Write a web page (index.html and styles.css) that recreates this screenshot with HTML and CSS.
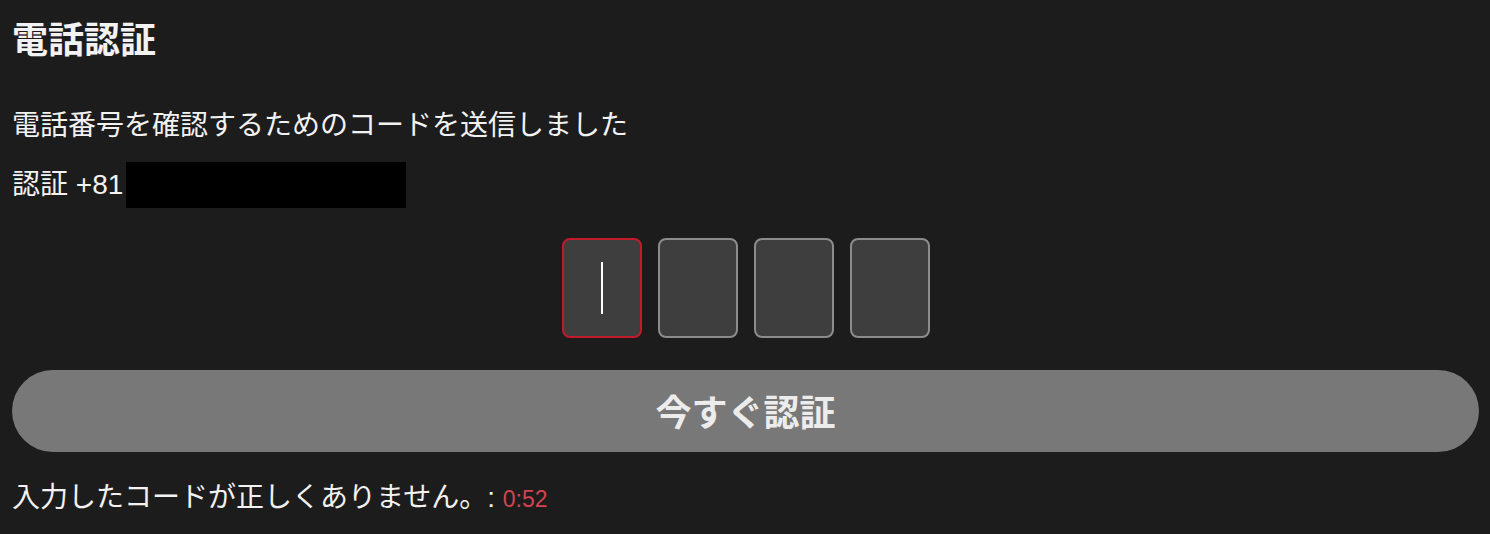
FILE: index.html
```html
<!DOCTYPE html>
<html lang="ja">
<head>
<meta charset="utf-8">
<title>電話認証</title>
<link rel="stylesheet" href="styles.css">
</head>
<body>
<main class="verify">
  <h1 class="verify-title">電話認証</h1>
  <p class="verify-lead">電話番号を確認するためのコードを送信しました</p>
  <p class="verify-phone">認証 +81<span class="masked"></span></p>
  <div class="code-row">
    <div class="code-cell active"><span class="caret"></span></div>
    <div class="code-cell"></div>
    <div class="code-cell"></div>
    <div class="code-cell"></div>
  </div>
  <button class="verify-btn" type="button">今すぐ認証</button>
  <p class="verify-error">入力したコードが正しくありません。: <span class="timer">0:52</span></p>
</main>
</body>
</html>
```
FILE: styles.css
```css
* { box-sizing: border-box; }

html, body {
  margin: 0;
  height: 100%;
  background: #1c1c1c;
}

body {
  color: #f2f2f2;
  font-family: "Liberation Sans", "Noto Sans CJK JP", sans-serif;
}

.verify {
  display: flex;
  flex-direction: column;
  padding: 16px 11px 0 12px;
}

.verify-title {
  margin: 0;
  font-size: 36px;
  line-height: 50px;
  font-weight: 700;
}

.verify-lead {
  margin: 40px 0 0;
  font-size: 28px;
  line-height: 40px;
}

.verify-phone {
  margin: 16px 0 0;
  display: flex;
  align-items: center;
  font-size: 28px;
  line-height: 46px;
}

.masked {
  display: inline-block;
  width: 280px;
  height: 46px;
  background: #000;
  margin-left: 3px;
}

.code-row {
  display: flex;
  justify-content: center;
  gap: 16px;
  margin-top: 30px;
}

.code-cell {
  width: 80px;
  height: 100px;
  border: 2px solid #8c8c8c;
  border-radius: 8px;
  background: #3e3e3e;
  display: flex;
  align-items: center;
  justify-content: center;
}

.code-cell.active {
  border-color: #c21a28;
}

.caret {
  width: 2px;
  height: 52px;
  background: #fff;
}

.verify-btn {
  margin-top: 32px;
  height: 82px;
  border: none;
  border-radius: 41px;
  background: #787878;
  color: #ececec;
  font-family: inherit;
  font-size: 36px;
  font-weight: 700;
  padding-bottom: 4px;
}

.verify-error {
  margin: 26px 0 0;
  font-size: 28px;
  line-height: 40px;
}

.timer {
  color: #d5434f;
  font-size: 23px;
}
```
